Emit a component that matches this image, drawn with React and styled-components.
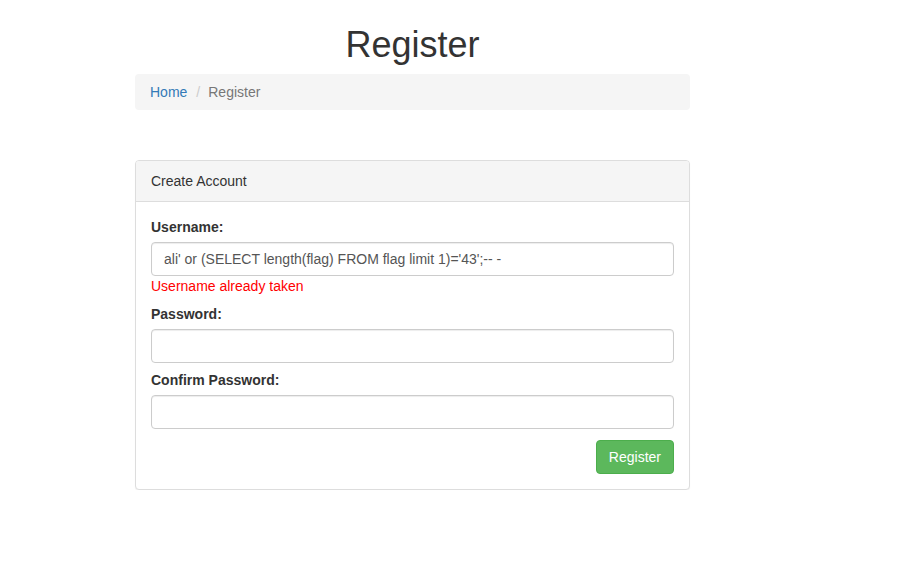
import React from "react";
import { styled, createGlobalStyle } from "styled-components";

const GlobalStyle = createGlobalStyle`
  * { box-sizing: border-box; }
  body {
    margin: 0;
    background: #fff;
    color: #333;
    font-family: "Liberation Sans", Arial, sans-serif;
    font-size: 14px;
    line-height: 20px;
  }
`;

export default function App() {
  return (
    <>
      <GlobalStyle />
      <Column>
        <Title>Register</Title>
        <Breadcrumb>
          <Crumb href="#">Home</Crumb>
          <Divider>/</Divider>
          <Active>Register</Active>
        </Breadcrumb>

        <Panel>
          <PanelHeading>Create Account</PanelHeading>
          <PanelBody>
            <Group>
              <Label>Username:</Label>
              <Input
                type="text"
                defaultValue="ali' or (SELECT length(flag) FROM flag limit 1)='43';-- -"
              />
              <ErrorText>Username already taken</ErrorText>
            </Group>
            <Group>
              <Label>Password:</Label>
              <Input type="password" />
            </Group>
            <Group>
              <Label>Confirm Password:</Label>
              <Input type="password" />
            </Group>
            <Actions>
              <SuccessButton type="button">Register</SuccessButton>
            </Actions>
          </PanelBody>
        </Panel>
      </Column>
    </>
  );
}

const Column = styled.div`
  width: 555px;
  margin-left: 135px;
  display: flex;
  flex-direction: column;
`;

const Title = styled.h1`
  margin: 26px 0 10px;
  font-size: 36px;
  font-weight: 500;
  line-height: 38px;
  text-align: center;
  color: #333;
`;

const Breadcrumb = styled.div`
  display: flex;
  align-items: center;
  padding: 8px 15px;
  background-color: #f5f5f5;
  border-radius: 4px;
  margin-bottom: 50px;
`;

const Crumb = styled.a`
  color: #337ab7;
  text-decoration: none;
`;

const Divider = styled.span`
  color: #ccc;
  padding: 0 8px 0 9px;
`;

const Active = styled.span`
  color: #777;
`;

const Panel = styled.div`
  border: 1px solid #ddd;
  border-radius: 4px;
  background: #fff;
  box-shadow: 0 1px 1px rgba(0, 0, 0, 0.05);
`;

const PanelHeading = styled.div`
  padding: 10px 15px;
  background-color: #f5f5f5;
  border-bottom: 1px solid #ddd;
  border-radius: 3px 3px 0 0;
  color: #333;
`;

const PanelBody = styled.div`
  padding: 15px;
  display: flex;
  flex-direction: column;
`;

const Group = styled.div`
  display: flex;
  flex-direction: column;
  margin-bottom: 7px;
`;

const Label = styled.label`
  font-weight: 700;
  margin-bottom: 5px;
`;

const Input = styled.input`
  height: 34px;
  padding: 6px 12px;
  font-family: inherit;
  font-size: 14px;
  color: #555;
  border: 1px solid #ccc;
  border-radius: 4px;
  box-shadow: inset 0 1px 1px rgba(0, 0, 0, 0.075);
  outline: none;
`;

const ErrorText = styled.span`
  color: #f00;
  margin-bottom: 1px;
`;

const Actions = styled.div`
  display: flex;
  justify-content: flex-end;
  margin-top: 4px;
`;

const SuccessButton = styled.button`
  padding: 6px 12px;
  font-family: inherit;
  font-size: 14px;
  line-height: 20px;
  color: #fff;
  background-color: #5cb85c;
  border: 1px solid #4cae4c;
  border-radius: 4px;
  cursor: pointer;
`;
